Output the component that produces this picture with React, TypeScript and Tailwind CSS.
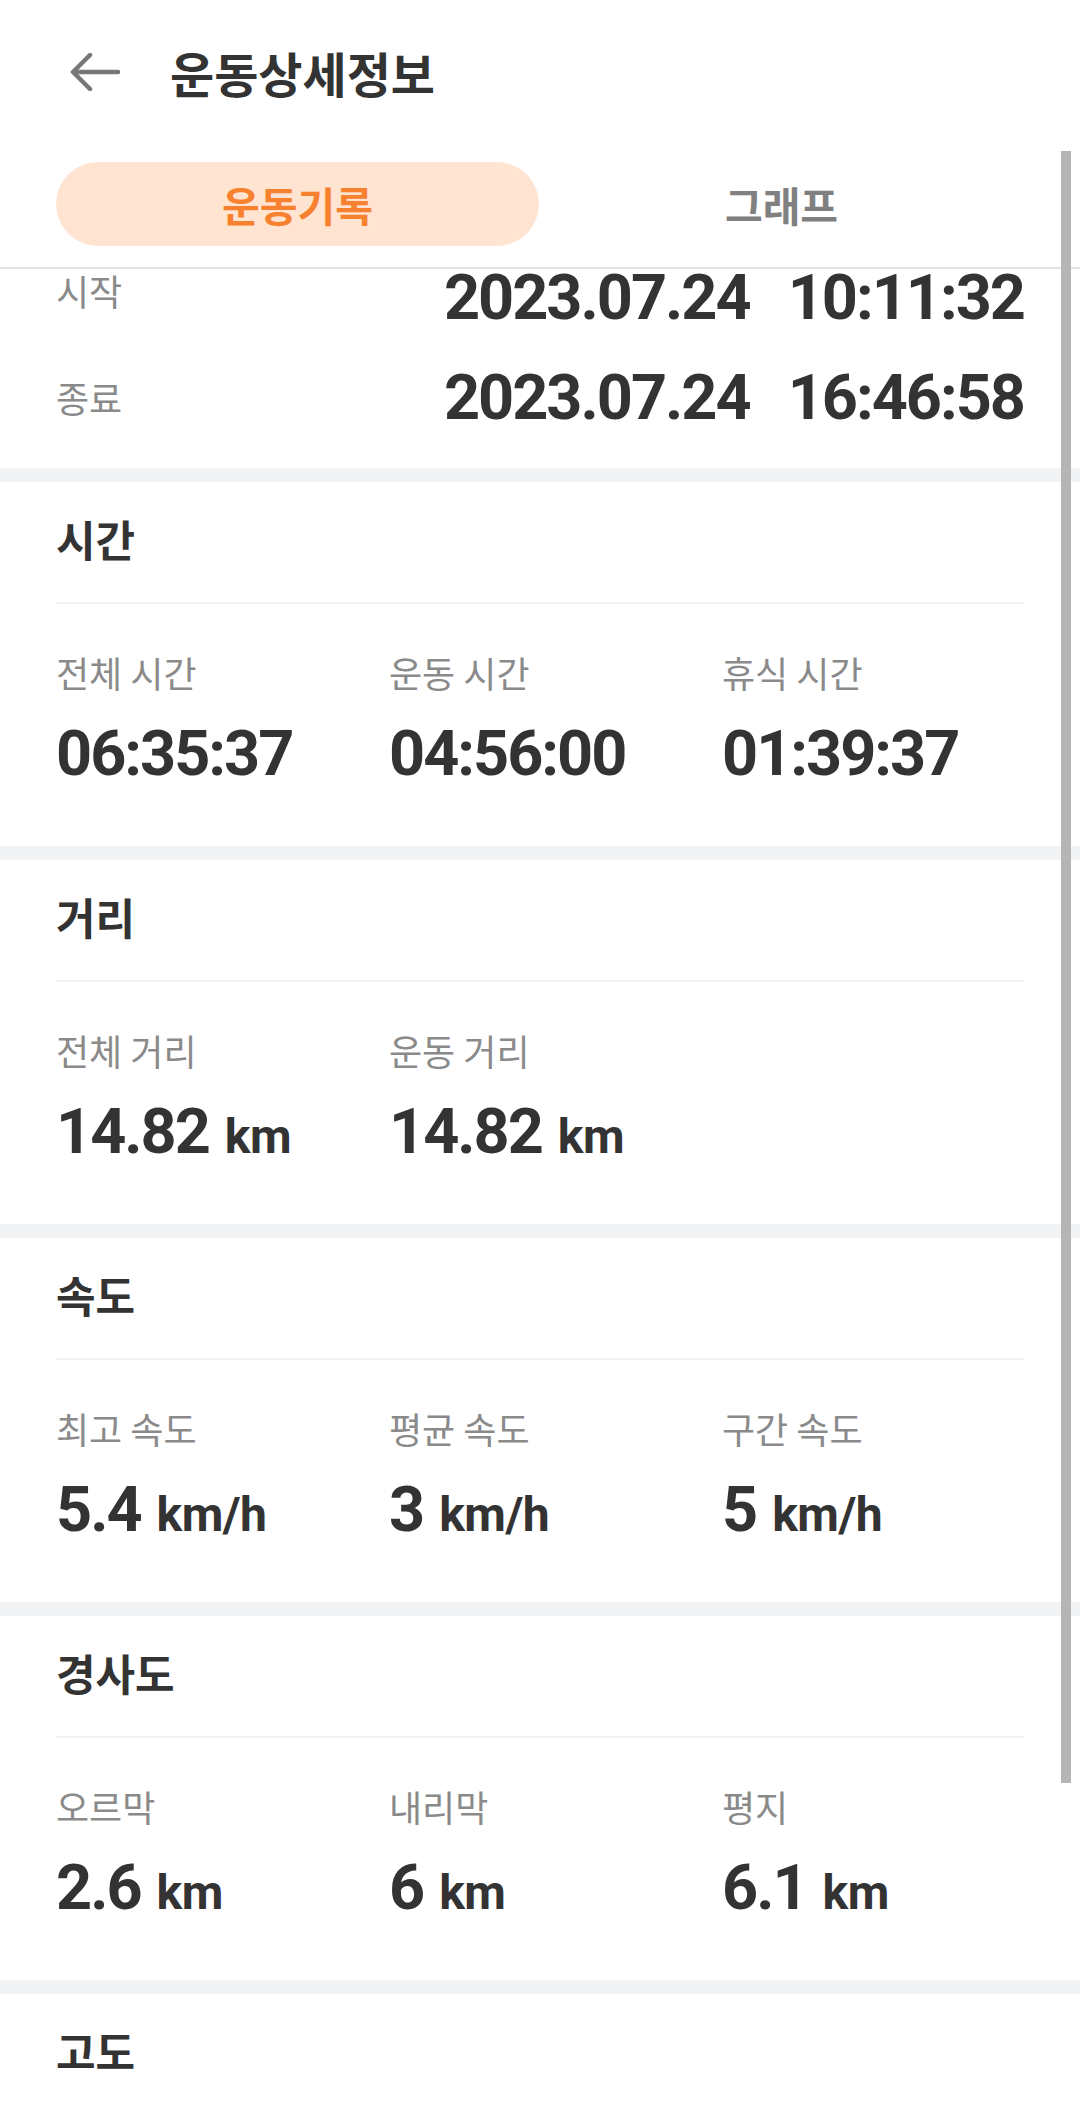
import React from 'react'

const kr = "font-['Noto_Sans_CJK_KR','Noto_Sans',sans-serif]";
const num = "font-['Roboto','Liberation_Sans',sans-serif]";

type Stat = {
    label: string;
    value: string;
    unit?: string;
};

type SectionProps = {
    title: string;
    stats: Stat[];
};

const Band = () => <div className="h-[14px] bg-[#f2f3f5]"/>;

const StatSection = ({title, stats}: SectionProps) => {
    return (
        <section className="h-[364px] px-[56px]">
            <h2 className={`${kr} pt-[35px] h-[78px] text-[43px] leading-[43px] font-bold text-[#333333]`}>
                {title}
            </h2>
            <div className="mt-[42px] h-[2px] bg-[#f1f1f1]"/>
            <div className="grid grid-cols-[333px_333px_1fr]">
                {stats.map((s) => (
                    <div key={s.label}>
                        <div className={`${kr} mt-[50px] text-[36px] leading-[36px] text-[#8a8a8a]`}>
                            {s.label}
                        </div>
                        <div className={`${num} mt-[32px] flex items-baseline leading-none font-bold text-[#333333]`}>
                            <span className="text-[63px] tracking-[-2px]">{s.value}</span>
                            {s.unit && (
                                <span className="ml-[16px] text-[48px] tracking-[-0.5px]">{s.unit}</span>
                            )}
                        </div>
                    </div>
                ))}
            </div>
        </section>
    );
};

const App = () => {
    return (
        <div className="relative w-[1080px] h-[2106px] overflow-hidden bg-white">
            {/* header */}
            <header className="flex h-[144px] items-center pl-[70px]">
                <svg width="50" height="38" viewBox="0 0 50 38" fill="none">
                    <path d="M3 19H48M20 2L3 19L20 36" stroke="#777777" strokeWidth="4.5" strokeLinecap="round"
                          strokeLinejoin="round"/>
                </svg>
                <h1 className={`${kr} ml-[50px] text-[48px] leading-none font-bold text-[#333333]`}>
                    운동상세정보
                </h1>
            </header>

            {/* tabs */}
            <div className="flex px-[56px] pt-[18px] pb-[21px]">
                <div className="flex h-[84px] w-[483px] items-center justify-center rounded-full bg-[#ffe4d2]">
                    <span className={`${kr} text-[41px] leading-none font-bold text-[#f7812f]`}>운동기록</span>
                </div>
                <div className="flex h-[84px] flex-1 items-center justify-center">
                    <span className={`${kr} text-[41px] leading-none font-bold text-[#808080]`}>그래프</span>
                </div>
            </div>
            <div className="h-[2px] bg-[#e3e3e3]"/>

            {/* start / end */}
            <section className="h-[199px] px-[56px]">
                {[
                    {label: "시작", date: "2023.07.24", time: "10:11:32"},
                    {label: "종료", date: "2023.07.24", time: "16:46:58"},
                ].map((row, i) => (
                    <div key={row.label}
                         className={`flex h-[56px] items-center justify-between ${i === 1 ? "mt-[44px]" : ""}`}>
                        <span className={`${kr} text-[36px] leading-none text-[#8a8a8a] ${i === 0 ? "mb-[14px]" : ""}`}>
                            {row.label}
                        </span>
                        <span className={`${num} text-[63px] leading-none font-bold tracking-[-2px] text-[#333333]`}>
                            {row.date}
                            <span className="ml-[38px]">{row.time}</span>
                        </span>
                    </div>
                ))}
            </section>
            <Band/>

            <StatSection title="시간" stats={[
                {label: "전체 시간", value: "06:35:37"},
                {label: "운동 시간", value: "04:56:00"},
                {label: "휴식 시간", value: "01:39:37"},
            ]}/>
            <Band/>

            <StatSection title="거리" stats={[
                {label: "전체 거리", value: "14.82", unit: "km"},
                {label: "운동 거리", value: "14.82", unit: "km"},
            ]}/>
            <Band/>

            <StatSection title="속도" stats={[
                {label: "최고 속도", value: "5.4", unit: "km/h"},
                {label: "평균 속도", value: "3", unit: "km/h"},
                {label: "구간 속도", value: "5", unit: "km/h"},
            ]}/>
            <Band/>

            <StatSection title="경사도" stats={[
                {label: "오르막", value: "2.6", unit: "km"},
                {label: "내리막", value: "6", unit: "km"},
                {label: "평지", value: "6.1", unit: "km"},
            ]}/>
            <Band/>

            <section className="px-[56px]">
                <h2 className={`${kr} pt-[35px] text-[43px] leading-[43px] font-bold text-[#333333]`}>고도</h2>
            </section>

            {/* scroll indicator */}
            <div className="absolute left-[1061px] top-[151px] h-[1632px] w-[10px] bg-[#b5b5b5]"/>
        </div>
    );
};

export default App
